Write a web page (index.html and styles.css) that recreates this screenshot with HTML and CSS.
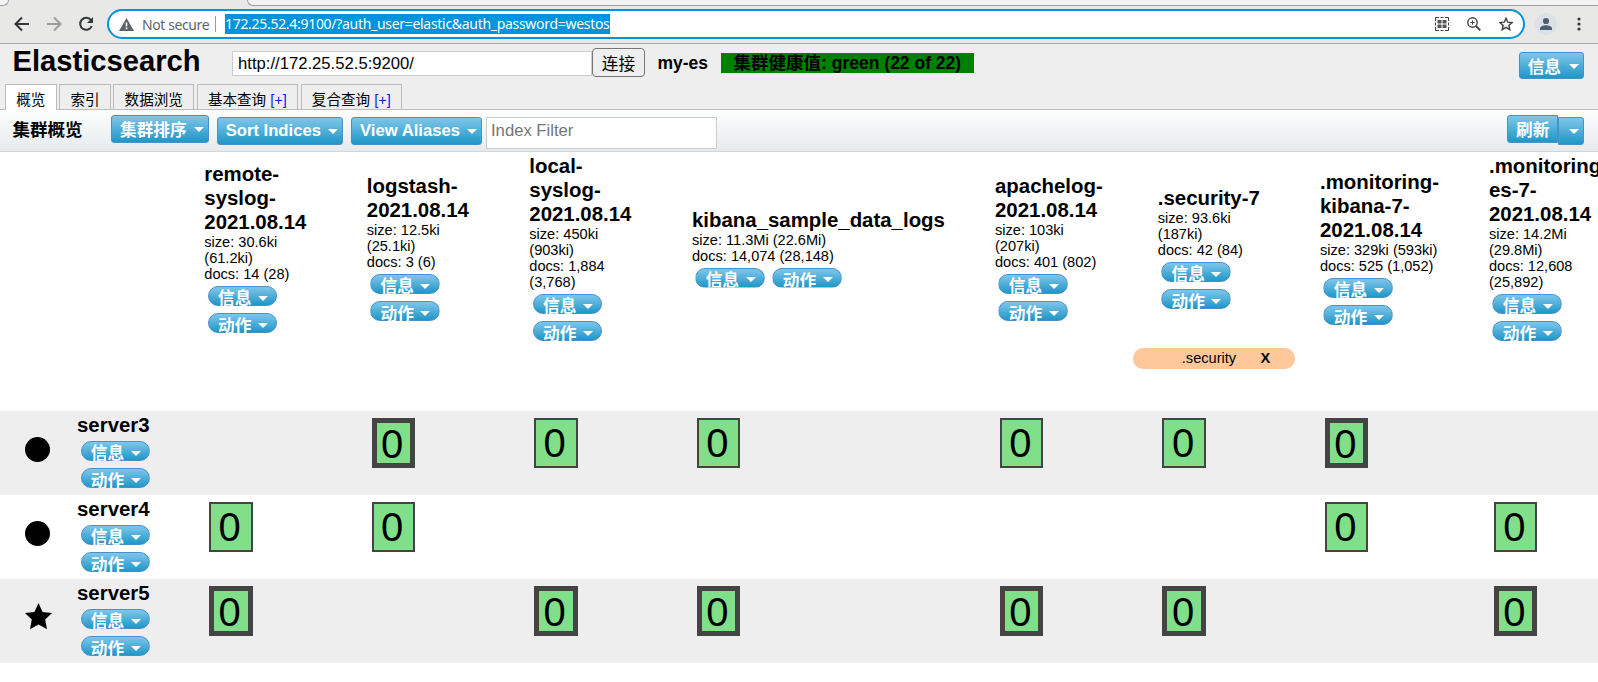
FILE: index.html
```
<!DOCTYPE html>
<html>
<head>
	<title>elasticsearch-head</title>
	<meta charset="utf-8"/>
	<link rel="stylesheet" href="styles.css">
</head>
<body>
<div class="browser">
	<div class="tabstrip"><span class="tab-left"></span><span class="tab-right"></span></div>
	<div class="navbar">
		<svg class="nav-icon" width="16" height="16" viewBox="0 0 16 16" fill="none" stroke="#33373a" stroke-width="2"><path d="M15 8H2M8 1.5L1.5 8L8 14.5"/></svg>
		<svg class="nav-icon" width="16" height="16" viewBox="0 0 16 16" fill="none" stroke="#9a9b9b" stroke-width="2"><path d="M1 8H14M8 1.5L14.5 8L8 14.5"/></svg>
		<svg class="nav-icon" width="16" height="16" viewBox="0 0 16 16"><path d="M13 4.2A6 6 0 1 0 13.8 10" fill="none" stroke="#33373a" stroke-width="2"/><path d="M15 1v6H9z" fill="#33373a"/></svg>
		<div class="omnibox">
			<svg class="warn" width="15" height="13" viewBox="0 0 15 13"><path d="M7.5 0L15 13H0z" fill="#5f6368"/><path d="M7.5 4.5v4M7.5 9.5v1.7" stroke="#fff" stroke-width="1.6"/></svg>
			<span class="not-secure">Not secure</span>
			<span class="divider"></span>
			<span class="url">172.25.52.4:9100/?auth_user=elastic&amp;auth_password=westos</span>
			<span class="omni-icons">
				<svg width="14" height="14" viewBox="0 0 14 14"><path d="M.5 4V.5H4M5.500 .5h3M10 .5h3.500V4M13.500 5.500v3M13.500 10v3.500H10M8.500 13.500h-3M4 13.500H.5V10M.5 8.500v-3" fill="none" stroke="#444"/><path d="M2.500 3h4v3.500h-4zM7.500 3h4v3.500h-4zM2.500 7.500h4V11h-4zM7.500 7.500h4V11h-4z" fill="#555"/></svg>
				<svg width="14" height="14" viewBox="0 0 14 14" fill="none" stroke="#444"><circle cx="5.500" cy="5.500" r="4.700" stroke-width="1.400"/><path d="M9 9l4.300 4.300" stroke-width="1.800"/><path d="M3.300 5.500h4.400M5.500 3.300v4.400"/></svg>
				<svg width="14" height="14" viewBox="0 0 14 14"><path d="M7 1.300L8.700 5.200L13 5.600L9.800 8.400L10.800 12.700L7 10.400L3.200 12.700L4.200 8.400L1 5.600L5.300 5.200z" fill="none" stroke="#3c4043" stroke-width="1.400"/></svg>
			</span>
		</div>
		<svg class="avatar" width="22" height="22" viewBox="0 0 22 22"><circle cx="11" cy="11" r="11" fill="#dce0e8"/><circle cx="11" cy="8" r="3.100" fill="#4d6072"/><path d="M5 17v-1.700c0-2 3.500-3.100 6-3.100s6 1.100 6 3.100V17z" fill="#4d6072"/></svg>
		<svg class="dots" width="4" height="14" viewBox="0 0 4 14" fill="#33373a"><circle cx="2" cy="2" r="1.600"/><circle cx="2" cy="7" r="1.600"/><circle cx="2" cy="12" r="1.600"/></svg>
	</div>
</div>

<div class="header">
	<div class="header-top">
		<h1>Elasticsearch</h1>
		<input class="connect-uri" type="text" value="http://172.25.52.5:9200/"/>
		<button class="connect">连接</button>
		<span class="cluster-name">my-es</span>
		<span class="health">集群健康值: green (22 of 22)</span>
		<span class="btn header-info">信息<i></i></span>
	</div>
	<div class="tabs">
		<div class="tab active">概览</div>
		<div class="tab">索引</div>
		<div class="tab">数据浏览</div>
		<div class="tab">基本查询 <a>[+]</a></div>
		<div class="tab">复合查询 <a>[+]</a></div>
	</div>
</div>

<div class="toolbar">
	<h2>集群概览</h2>
	<span class="btn cjk">集群排序<i></i></span>
	<span class="btn">Sort Indices<i></i></span>
	<span class="btn">View Aliases<i></i></span>
	<input class="filter" type="text" placeholder="Index Filter"/>
	<span class="btn cjk refresh">刷新</span>
	<span class="btn refresh-menu"><i></i></span>
</div>

<div class="cluster">
	<div class="row head">
		<div></div>
		<div class="index"><h3>remote-<br>syslog-<br>2021.08.14</h3><p>size: 30.6ki<br>(61.2ki)<br>docs: 14 (28)</p><div class="menus"><span class="mini">信息<i></i></span><span class="mini action">动作<i></i></span></div></div>
		<div class="index"><h3>logstash-<br>2021.08.14</h3><p>size: 12.5ki<br>(25.1ki)<br>docs: 3 (6)</p><div class="menus"><span class="mini">信息<i></i></span><span class="mini action">动作<i></i></span></div></div>
		<div class="index"><h3>local-<br>syslog-<br>2021.08.14</h3><p>size: 450ki<br>(903ki)<br>docs: 1,884<br>(3,768)</p><div class="menus"><span class="mini">信息<i></i></span><span class="mini action">动作<i></i></span></div></div>
		<div class="index"><h3>kibana_sample_data_logs</h3><p>size: 11.3Mi (22.6Mi)<br>docs: 14,074 (28,148)</p><div class="menus wide"><span class="mini">信息<i></i></span><span class="mini action">动作<i></i></span></div></div>
		<div class="index"><h3>apachelog-<br>2021.08.14</h3><p>size: 103ki<br>(207ki)<br>docs: 401 (802)</p><div class="menus"><span class="mini">信息<i></i></span><span class="mini action">动作<i></i></span></div></div>
		<div class="index"><h3>.security-7</h3><p>size: 93.6ki<br>(187ki)<br>docs: 42 (84)</p><div class="menus"><span class="mini">信息<i></i></span><span class="mini action">动作<i></i></span></div></div>
		<div class="index"><h3>.monitoring-<br>kibana-7-<br>2021.08.14</h3><p>size: 329ki (593ki)<br>docs: 525 (1,052)</p><div class="menus"><span class="mini">信息<i></i></span><span class="mini action">动作<i></i></span></div></div>
		<div class="index"><h3>.monitoring-<br>es-7-<br>2021.08.14</h3><p>size: 14.2Mi<br>(29.8Mi)<br>docs: 12,608<br>(25,892)</p><div class="menus"><span class="mini">信息<i></i></span><span class="mini action">动作<i></i></span></div></div>
	</div>
	<div class="row aliases">
		<div class="alias"><span>.security</span><b>X</b></div>
	</div>

	<div class="row node odd">
		<div class="node-name">
			<svg width="27" height="27" viewBox="0 0 27 27"><circle cx="12.500" cy="12.500" r="12.500"/></svg>
			<div><h3>server3</h3><div class="menus"><span class="mini">信息<i></i></span><span class="mini action">动作<i></i></span></div></div>
		</div>
		<div></div>
		<div class="shard primary">0</div>
		<div class="shard">0</div>
		<div class="shard">0</div>
		<div class="shard">0</div>
		<div class="shard">0</div>
		<div class="shard primary">0</div>
		<div></div>
	</div>
	<div class="row node">
		<div class="node-name">
			<svg width="27" height="27" viewBox="0 0 27 27"><circle cx="12.500" cy="12.500" r="12.500"/></svg>
			<div><h3>server4</h3><div class="menus"><span class="mini">信息<i></i></span><span class="mini action">动作<i></i></span></div></div>
		</div>
		<div class="shard">0</div>
		<div class="shard">0</div>
		<div></div>
		<div></div>
		<div></div>
		<div></div>
		<div class="shard">0</div>
		<div class="shard">0</div>
	</div>
	<div class="row node odd">
		<div class="node-name">
			<svg class="star" width="27" height="27" viewBox="0 0 27 27"><path d="M13.500 0L17.600 8.900L27 10L20.200 16.500L22 26.200L13.500 21.600L5 26.200L6.800 16.500L0 10L9.400 8.900z"/></svg>
			<div><h3>server5</h3><div class="menus"><span class="mini">信息<i></i></span><span class="mini action">动作<i></i></span></div></div>
		</div>
		<div class="shard primary">0</div>
		<div></div>
		<div class="shard primary">0</div>
		<div class="shard primary">0</div>
		<div class="shard primary">0</div>
		<div class="shard primary">0</div>
		<div></div>
		<div class="shard primary">0</div>
	</div>
</div>
</body>
</html>
```
FILE: styles.css
```
* {
	box-sizing: border-box;
}

body {
	margin: 0;
	height: 682px;
	overflow: hidden;
	background: #fff;
	color: #000;
	font-family: "Liberation Sans", "Noto Sans CJK SC", sans-serif;
	font-size: 14.58px;
}

h1, h2, h3, p {
	margin: 0;
}

/* browser frame */
.browser {
	height: 44px;
	background: #e8e8e6;
	border-bottom: 1px solid #a8a8a8;
	font-family: "Noto Sans", sans-serif;
}

.tabstrip {
	display: flex;
	justify-content: space-between;
	height: 6px;
}

.tab-left {
	width: 9px;
	background: #f3f3f3;
	border: solid #a0a0a0;
	border-width: 0 1px 1px 0;
	border-bottom-right-radius: 7px;
}

.tab-right {
	width: 1351px;
	background: #f3f3f3;
	border: solid #a0a0a0;
	border-width: 0 0 1px 1px;
	border-bottom-left-radius: 7px;
}

.navbar {
	display: flex;
	align-items: center;
	height: 36px;
	padding-left: 14px;
}

.nav-icon {
	margin-right: 16px;
}

.omnibox {
	display: flex;
	align-items: center;
	width: 1418px;
	height: 30px;
	margin-left: -3px;
	padding-left: 10px;
	border: 2px solid #0093dd;
	border-radius: 15px;
	background: #fff;
	font-size: 14px;
	letter-spacing: -0.3px;
}

.not-secure {
	width: 67px;
	margin-left: 8px;
	color: #5f6368;
	letter-spacing: -0.4px;
	white-space: nowrap;
}

.divider {
	width: 1px;
	height: 16px;
	margin: 0 9px 0 6px;
	background: #9a9c9e;
}

.url {
	height: 20px;
	line-height: 20px;
	background: #0093dd;
	color: #fff;
	white-space: nowrap;
}

.omni-icons {
	display: flex;
	gap: 18px;
	margin: 0 10px 0 auto;
}

.avatar {
	margin-left: 10px;
}

.dots {
	margin-left: 20px;
}

/* page header */
.header {
	height: 66px;
	background: #eee;
	border-bottom: 1px solid #bbb;
}

.header-top {
	display: flex;
	align-items: flex-start;
	height: 40px;
	padding-left: 12.5px;
}

h1 {
	width: 219.5px;
	font-size: 29.17px;
	line-height: 34px;
}

.connect-uri,
.filter {
	margin: 7px 0 0;
	padding: 0 5px;
	border: 1px solid #ccc;
	background: #fff;
	font-family: inherit;
	font-size: 16.67px;
}

.connect-uri {
	width: 360px;
	height: 25px;
}

.connect {
	width: 53px;
	height: 29px;
	margin: 4px 0 0;
	padding: 0;
	border: 1px solid #767676;
	border-radius: 4px;
	background: #efefef;
	color: #000;
	font-family: inherit;
	font-size: 16.67px;
}

.cluster-name,
.health {
	height: 20px;
	margin: 9px 0 0 12.5px;
	font-size: 17.5px;
	font-weight: bold;
	line-height: 20px;
	white-space: nowrap;
}

.health {
	width: 253px;
	padding-left: 13px;
	background: green;
}

/* buttons */
.btn,
.mini {
	display: flex;
	align-items: center;
	border: 1px solid #4a90c8;
	background: linear-gradient(#7fc6ea, #1f97c7);
	color: #fff;
	font-size: 16.67px;
	font-weight: bold;
	white-space: nowrap;
}

.btn {
	height: 28px;
	padding: 0 4px 0 8px;
	border-radius: 3px;
}

.btn i,
.mini i {
	margin: 1px 0 0 7px;
	border: solid transparent;
	border-width: 5px 5px 0;
	border-top-color: #fff;
}

.header-info {
	height: 27px;
	margin: 8px 14px 0 auto;
}

.header-info i {
	margin-left: 8px;
}

.tabs {
	display: flex;
	gap: 2.4px;
	height: 26px;
	padding-left: 5px;
}

.tab {
	height: 25px;
	padding: 5px 10.3px 0;
	border: 1px solid #bbb;
	border-bottom: 0;
	font-size: 14.58px;
	line-height: 20px;
	white-space: nowrap;
}

.tab.active {
	height: 26px;
	background: #fff;
}

.tab a {
	color: #02f;
}

.toolbar {
	display: flex;
	height: 42px;
	padding: 7px 14px 0 12.5px;
	border-bottom: 1px solid #cfd5d8;
	background: linear-gradient(#fdfffe, #e6eaed);
}

.toolbar h2 {
	width: 98.5px;
	font-size: 17.5px;
	line-height: 26px;
}

.toolbar .btn {
	margin-right: 8px;
}

.toolbar .btn.cjk {
	margin-top: -2px;
}

.toolbar .filter {
	width: 231px;
	height: 32px;
	margin: 0 auto 0 -4px;
	padding: 0 4px 4px;
}

.filter::placeholder {
	color: #757575;
}

.toolbar .btn.refresh {
	width: 51px;
	margin-right: 0;
	border-radius: 3px 0 0 3px;
}

.toolbar .btn.refresh-menu {
	width: 26px;
	margin-right: 0;
	border-radius: 0 3px 3px 0;
}

.refresh-menu i {
	margin-left: 2px;
}

/* cluster overview */
.row {
	display: grid;
	grid-template-columns: 180px 162.5px 162.5px 162.7px 303px 162.8px 162.2px 169px 168px;
}

.head {
	height: 194px;
	align-items: center;
}

.index {
	padding-left: 24.3px;
}

h3 {
	font-size: 20.42px;
	line-height: 24px;
}

.index p {
	line-height: 16px;
}

.menus {
	display: flex;
	flex-direction: column;
}

.menus.wide {
	flex-direction: row;
}

/* labels are taller than the pill and get cut at its lower edge */
.mini {
	width: 69.3px;
	height: 20px;
	margin: 4px 4.2px 3px 3.5px;
	padding: 2px 0 0 9.3px;
	border-radius: 10px;
	clip-path: inset(0);
}

.mini.action {
	padding-top: 4px;
}

.mini i {
	margin: 2px 0 0 6.5px;
}

.mini.action i {
	margin-top: 0;
}

.aliases {
	height: 65px;
	padding-top: 2px;
}

.alias {
	display: flex;
	justify-content: space-between;
	grid-column: 7;
	width: 162.5px;
	height: 21px;
	margin-left: -0.7px;
	padding: 0 25px 0 49px;
	border-radius: 10px;
	background: #fec89a;
	line-height: 20px;
}

.node {
	height: 84px;
}

.odd {
	background: #eee;
}

.node-name {
	display: flex;
	gap: 25px;
	padding: 2px 0 0 25px;
}

.node-name svg {
	margin-top: 24px;
}

.node-name svg.star {
	margin-top: 22px;
}

.shard {
	width: 43.75px;
	height: 50px;
	margin: 7px 0 0 29px;
	padding-left: 7.5px;
	border: 2px solid #444;
	background: #80df88;
	font-size: 40px;
	line-height: 46px;
}

.shard.primary {
	padding-left: 4.5px;
	border-width: 5px;
	line-height: 42px;
}
```
